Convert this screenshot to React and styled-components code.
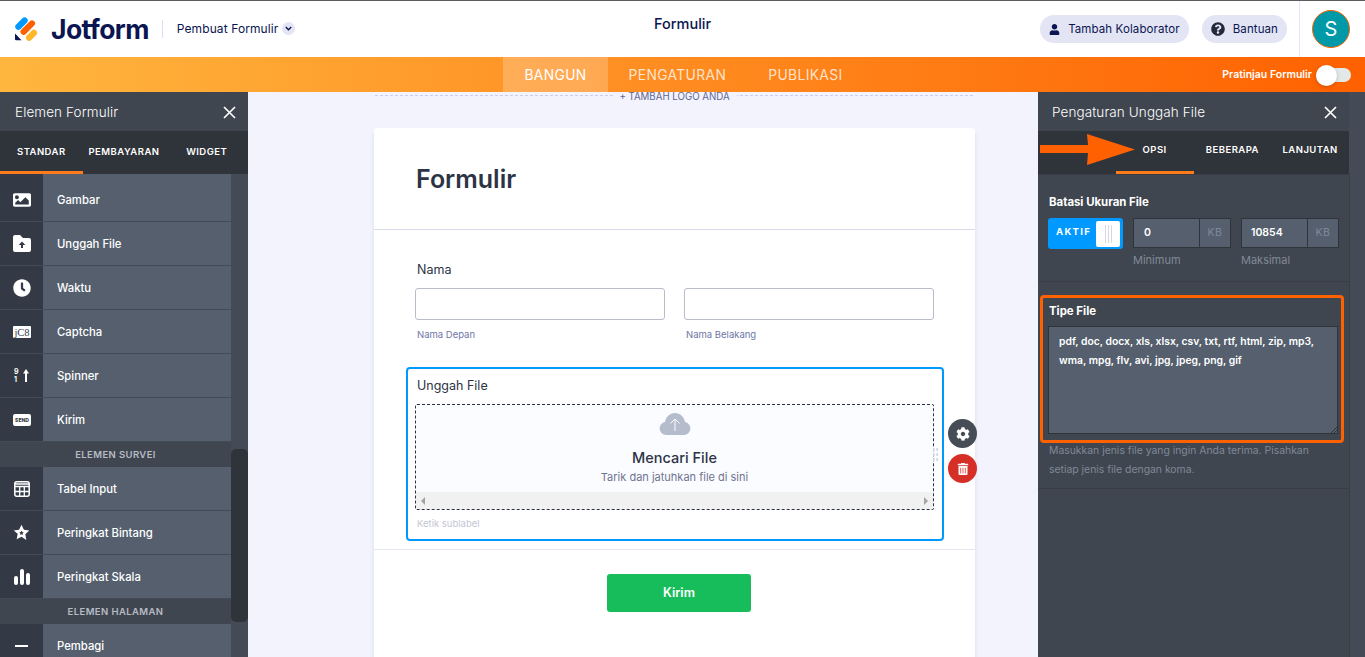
import React from "react";
import styled, { createGlobalStyle } from "styled-components";
import { FaCog, FaTrashAlt, FaUser, FaQuestionCircle, FaImage, FaClock } from "react-icons/fa";

const Global = createGlobalStyle`
  html, body { margin: 0; padding: 0; background: #f3f3fe; }
  * { box-sizing: border-box; }
  body { font-family: Inter, "Noto Sans", sans-serif; }
`;

const Page = styled.div`
  width: 1365px;
  height: 657px;
  overflow: hidden;
  display: flex;
  flex-direction: column;
  position: relative;
`;

const Header = styled.header`
  height: 57px;
  flex: none;
  background: #fff;
  border-top: 1px solid #5c5c5c;
  display: grid;
  grid-template-columns: 1fr auto 1fr;
  color: #0a1551;
`;
const Brand = styled.div`
  display: flex;
  align-items: center;
  padding: 0 0 1px 15px;
`;
const LogoText = styled.span`
  font-size: 26.5px;
  font-weight: 700;
  letter-spacing: -0.6px;
  margin-left: 12px;
`;
const BrandDivider = styled.span`
  width: 1px;
  height: 18px;
  background: #dadef3;
  margin: 0 14px 0 13px;
`;
const BrandSub = styled.span`
  font-size: 12px;
  letter-spacing: 0.1px;
`;
const Chevron = styled.span`
  width: 13px;
  height: 13px;
  border-radius: 50%;
  background: #e3e5f5;
  margin-left: 4px;
  display: flex;
  align-items: center;
  justify-content: center;
`;
const Title = styled.div`
  font-size: 14.5px;
  font-weight: 500;
  padding-top: 14px;
`;
const HeaderRight = styled.div`
  display: flex;
  justify-content: flex-end;
  align-items: center;
`;
const Pill = styled.button`
  height: 28px;
  border: 0;
  border-radius: 14px;
  background: #e3e5f5;
  color: #0a1551;
  font: 400 11.5px Inter, sans-serif;
  letter-spacing: 0.1px;
  display: flex;
  align-items: center;
  gap: 8px;
  padding: 0 9px;
  margin-left: 13px;
`;
const UserBox = styled.div`
  margin-left: 12px;
  height: 56px;
  width: 66px;
  border-left: 1px solid #e3e5f5;
  padding-left: 12px;
  display: flex;
  align-items: center;
`;
const Avatar = styled.div`
  width: 38px;
  height: 38px;
  border-radius: 50%;
  background: #0099a8;
  border: 1px solid #ff6100;
  color: #fff;
  font-size: 20px;
  display: flex;
  align-items: center;
  justify-content: center;
`;

const NavBar = styled.nav`
  height: 35px;
  flex: none;
  background: linear-gradient(90deg, #ffb63f 0%, #ff6100 100%);
  display: grid;
  grid-template-columns: 1fr auto 1fr;
`;
const NavTabs = styled.div`
  display: flex;
  margin-left: 2px;
`;
const NavTab = styled.div`
  padding: 0 21px;
  font-size: 13.8px;
  letter-spacing: 0.38px;
  display: flex;
  align-items: center;
  color: ${p => (p.$active ? "#fff" : "rgba(255,255,255,.78)")};
  background: ${p => (p.$active ? "rgba(255,255,255,.22)" : "transparent")};
`;
const Preview = styled.div`
  display: flex;
  justify-content: flex-end;
  align-items: center;
  padding-right: 14px;
  gap: 4px;
  color: #fff;
  font-size: 10.5px;
  font-weight: 600;
`;
const PreviewSwitch = styled.span`
  width: 35px;
  height: 14px;
  border-radius: 7px;
  background: #e3e8e8;
  position: relative;
`;
const PreviewKnob = styled.span`
  position: absolute;
  left: 0;
  top: -3px;
  width: 21px;
  height: 21px;
  border-radius: 50%;
  background: #fff;
  box-shadow: 0 1px 4px rgba(0, 0, 0, 0.2);
`;

const Workspace = styled.div`
  flex: 1;
  min-height: 0;
  display: flex;
`;
const Panel = styled.aside`
  flex: none;
  width: ${p => p.$w}px;
  background: #444b56;
  display: flex;
  flex-direction: column;
  overflow: hidden;
  position: relative;
`;
const PanelHead = styled.div`
  height: 39px;
  flex: none;
  width: ${p => p.$w}px;
  background: #40464f;
  color: #fff;
  font-size: 13.5px;
  font-weight: 300;
  letter-spacing: 0.1px;
  padding: 1px 12px 0 ${p => p.$pad}px;
  display: flex;
  align-items: center;
  justify-content: space-between;
`;
const PanelTabs = styled.div`
  height: 43px;
  flex: none;
  width: ${p => p.$w}px;
  background: #2f333a;
  display: grid;
  grid-template-columns: repeat(${p => p.$n}, 1fr);
`;
const PanelTab = styled.div`
  display: flex;
  align-items: center;
  justify-content: center;
  color: #fff;
  font-size: 9.5px;
  font-weight: 600;
  letter-spacing: 0.45px;
  padding-bottom: ${p => p.$lift}px;
  border-bottom: 3px solid ${p => (p.$active ? "#ff7b1c" : "transparent")};
`;

const ElementList = styled.div`
  width: 231px;
  padding-top: 4px;
  background: linear-gradient(90deg, #343a45 43px, #555f6e 43px);
`;
const ElementRow = styled.div`
  height: 44px;
  display: flex;
  align-items: center;
  border-bottom: 1px solid #434b57;
  background: #555f6e;
  color: #fff;
  font-size: 11.3px;
  font-weight: 500;
`;
const ElementIcon = styled.span`
  width: 43px;
  height: 100%;
  flex: none;
  background: #343a45;
  margin-right: 14px;
  display: flex;
  align-items: center;
  justify-content: center;
`;
const SectionRow = styled.div`
  height: 25px;
  background: #40464f;
  color: #b6bcc6;
  font-size: 9.5px;
  font-weight: 600;
  letter-spacing: 0.4px;
  padding-bottom: 1px;
  display: flex;
  align-items: center;
  justify-content: center;
`;
const ScrollThumb = styled.div`
  position: absolute;
  left: 231px;
  top: 357px;
  width: 17px;
  height: 173px;
  border-radius: 5px;
  background: #2f333a;
`;

const Canvas = styled.main`
  flex: 1;
  background: #f3f3fe;
  padding-left: 126px;
  overflow: hidden;
`;
const FormColumn = styled.div`
  width: 601px;
`;
const LogoSlot = styled.div`
  height: 36px;
  padding-top: 3px;
  position: relative;
`;
const LogoLine = styled.div`
  border-top: 1px dashed #c8ceed;
  margin: 0 2px 0 1px;
`;
const LogoLabel = styled.span`
  position: absolute;
  left: 50%;
  top: 0;
  transform: translateX(-50%);
  background: #f3f3fe;
  padding: 0 7px;
  font-size: 9.7px;
  line-height: 10px;
  color: #5f6690;
  white-space: nowrap;
`;
const Card = styled.div`
  background: #fff;
  border-radius: 3px 3px 0 0;
  height: 600px;
  box-shadow: 0 4px 4px rgba(87, 114, 174, 0.16);
`;
const CardTitle = styled.h1`
  margin: 0;
  height: 102px;
  border-bottom: 1px solid #d8dae9;
  padding: 33px 0 0 42px;
  font-size: 25px;
  line-height: 36px;
  font-weight: 600;
  color: #2c3345;
`;
const NameField = styled.div`
  padding: 31px 41px 0;
`;
const FieldLabel = styled.div`
  color: #2c3345;
  font-size: 12.5px;
  line-height: 18px;
  padding-left: ${p => p.$indent || 0}px;
`;
const NameGrid = styled.div`
  display: grid;
  grid-template-columns: 250px 250px;
  gap: 19px;
  margin-top: 9px;
`;
const TextBox = styled.div`
  height: 32px;
  border: 1px solid #b8bdc9;
  border-radius: 3px;
`;
const SubLabel = styled.div`
  font-size: 9.5px;
  line-height: 12px;
  color: #6f76a7;
  margin: 9px 0 0 2px;
`;
const UploadField = styled.div`
  position: relative;
  margin: 26px 31px 0 32px;
  height: 174px;
  border: 2px solid #0099ff;
  border-radius: 4px;
  padding: 8px 8px 0 7px;
`;
const UploadZone = styled.div`
  height: 106px;
  margin-top: 9px;
  border: 1px dashed #2c3345;
  border-radius: 2px;
  background: #fbfcff;
  display: flex;
  flex-direction: column;
  align-items: center;
  padding-top: 8px;
`;
const ZoneTitle = styled.div`
  margin-top: 13px;
  font-size: 14.5px;
  font-weight: 500;
  line-height: 20px;
  color: #2c3345;
`;
const ZoneHint = styled.div`
  font-size: 11px;
  line-height: 14px;
  margin-top: 2px;
  color: #6f7490;
`;
const ZoneScroll = styled.div`
  margin-top: auto;
  width: 100%;
  height: 17px;
  background: #f1f1f1;
  display: flex;
  align-items: center;
  justify-content: space-between;
  padding: 0 5px;
`;
const ScrollArrow = styled.span`
  width: 0;
  height: 0;
  border-top: 4px solid transparent;
  border-bottom: 4px solid transparent;
  border-${p => (p.$left ? "right" : "left")}: 4px solid #a3a3a3;
`;
const TypeSub = styled.div`
  font-size: 9.5px;
  line-height: 12px;
  margin: 8px 0 0 2px;
  color: #c3c6d4;
`;
const RoundAction = styled.span`
  position: absolute;
  left: 540px;
  top: ${p => p.$top}px;
  width: 29px;
  height: 29px;
  border-radius: 50%;
  background: ${p => p.$bg};
  color: #fff;
  display: flex;
  align-items: center;
  justify-content: center;
`;
const DragDots = styled.span`
  position: absolute;
  left: 524px;
  top: 78px;
  width: 7px;
  height: 15px;
  background-image: radial-gradient(circle, #d0d4e6 1.1px, transparent 1.2px);
  background-size: 3.5px 5px;
`;
const FormFooter = styled.div`
  margin-top: 8px;
  border-top: 1px solid #e3e5f0;
  padding-top: 24px;
  display: flex;
  justify-content: center;
`;
const Submit = styled.button`
  width: 144px;
  height: 38px;
  margin-left: 9px;
  border: 0;
  border-radius: 3px;
  padding: 0 0 2px;
  background: #18bd5b;
  color: #fff;
  font: 600 12.5px Inter, sans-serif;
`;

const Settings = styled.div`
  width: 312px;
  flex: 1;
  color: #fff;
  background: #40464f;
  border-right: 1px solid #383d46;
`;
const LimitSection = styled.section`
  height: 108px;
  border-top: 1px solid #383d46;
  border-bottom: 1px solid #383d46;
  padding: 20px 0 0 10px;
`;
const SectionTitle = styled.div`
  font-size: 11.4px;
  font-weight: 700;
  line-height: 14px;
  padding-left: 1px;
`;
const LimitRow = styled.div`
  display: flex;
  gap: 10px;
  margin-top: 9px;
`;
const OnToggle = styled.div`
  width: 75px;
  height: 31px;
  flex: none;
  border-radius: 3px;
  background: #0099ff;
  position: relative;
  font-size: 9.5px;
  font-weight: 700;
  letter-spacing: 1.3px;
  padding: 8px 0 0 8px;
`;
const OnKnob = styled.span`
  position: absolute;
  right: 3px;
  top: 3px;
  width: 24px;
  height: 26px;
  border-radius: 2px;
  background: #fff;
  display: flex;
  justify-content: center;
  gap: 2px;
  padding: 4px 0;
`;
const KnobLine = styled.i`
  width: 1px;
  background: #d5d8df;
`;
const SizeColumn = styled.div`
  width: 98px;
  flex: none;
`;
const SizeBox = styled.div`
  height: 30px;
  background: #555f6e;
  border: 1px solid #2f333a;
  display: flex;
  font-size: 10.5px;
  font-weight: 600;
`;
const SizeValue = styled.span`
  flex: 1;
  padding-left: ${p => p.$pad}px;
  line-height: 28px;
`;
const SizeUnit = styled.span`
  width: 31px;
  border-left: 1px solid #2f333a;
  color: #7f8998;
  font-weight: 400;
  letter-spacing: 0.5px;
  text-align: center;
  line-height: 28px;
`;
const SizeLabel = styled.div`
  font-size: 11px;
  line-height: 14px;
  margin-top: 5px;
  color: #7f8998;
`;
const TypeSection = styled.section`
  height: 207px;
  padding-top: 13px;
  border-bottom: 1px solid #383d46;
`;
const Highlight = styled.div`
  margin: 0 5px 0 2px;
  height: 148px;
  border: 3px solid #ff6100;
  border-radius: 4px;
  padding: 6px 3px 0 5px;
`;
const TypeBox = styled.div`
  position: relative;
  height: 108px;
  margin-top: 8px;
  background: #555f6e;
  border: 1px solid #2f333a;
  padding: 5px 10px;
  font-size: 10.35px;
  font-weight: 600;
  line-height: 19px;
`;
const Grip = styled.svg`
  position: absolute;
  right: 0;
  bottom: 0;
`;
const HelpText = styled.p`
  margin: -2px 12px 0 11px;
  font-size: 10.4px;
  line-height: 19px;
  color: #7f8998;
`;
const Arrow = styled.svg`
  position: absolute;
  left: 2px;
  top: 42px;
`;

const white = "#fff";
const Star = () => (
  <svg width="17" height="17" viewBox="0 0 24 24">
    <path fill={white} fillRule="evenodd" d="M12 1l3.4 7.2 7.6 1-5.6 5.4 1.4 7.9L12 18l-6.800 3.500 1.400-7.900L1 9.200l7.600-1zM12 9l-1 2.200-2.300.3 1.700 1.600-.4 2.300 2-1.100 2 1.100-.4-2.300 1.700-1.600-2.300-.3z" />
  </svg>
);
const items = {
  image: <FaImage size={18} color={white} />,
  upload: (
    <svg width="18" height="17" viewBox="0 0 18 17">
      <path fill={white} fillRule="evenodd" d="M2 0h5l3 3h6a2 2 0 0 1 2 2v10a2 2 0 0 1-2 2H2a2 2 0 0 1-2-2V2a2 2 0 0 1 2-2zm7 6.500L5.700 10H8v3h2v-3h2.300z" />
    </svg>
  ),
  clock: <FaClock size={18} color={white} />,
  captcha: (
    <svg width="18" height="12" viewBox="0 0 18 12">
      <rect width="18" height="12" rx="1" fill={white} />
      <text x="9" y="9.500" textAnchor="middle" fontSize="10.500" fontFamily="Liberation Serif, serif" fill="#343a45">jC8</text>
    </svg>
  ),
  spinner: (
    <svg width="16" height="17" viewBox="0 0 16 17">
      <text x="0" y="7" fontSize="7" fontWeight="700" fontFamily="Inter, sans-serif" fill={white}>9</text>
      <text x="0" y="15" fontSize="7" fontWeight="700" fontFamily="Inter, sans-serif" fill={white}>1</text>
      <path fill={white} d="M12 2l3 4.500h-2V15h-2V6.500H9z" />
    </svg>
  ),
  send: (
    <svg width="18" height="12" viewBox="0 0 18 12">
      <rect width="18" height="12" rx="2" fill={white} />
      <text x="9" y="8" textAnchor="middle" fontSize="5" fontWeight="800" fontFamily="Inter, sans-serif" fill="#343a45">SEND</text>
    </svg>
  ),
  table: (
    <svg width="16" height="16" viewBox="0 0 16 16">
      <rect x=".8" y=".8" width="14.400" height="14.400" rx="2" fill="none" stroke={white} strokeWidth="1.500" />
      <path stroke={white} strokeWidth="1.300" d="M1 5.500h14M1 10.500h14M5.700 5v10M10.300 5v10M1 3h14" />
    </svg>
  ),
  star: <Star />,
  bars: (
    <svg width="16" height="16" viewBox="0 0 16 16">
      <rect x="0" y="7" width="4" height="9" rx="2" fill={white} />
      <rect x="6" y="0" width="4" height="16" rx="2" fill={white} />
      <rect x="12" y="4" width="4" height="12" rx="2" fill={white} />
    </svg>
  ),
  minus: (
    <svg width="13" height="2" viewBox="0 0 13 2">
      <rect width="13" height="2" fill={white} />
    </svg>
  ),
};

const Close = () => (
  <svg width="13" height="13" viewBox="0 0 13 13">
    <path d="M1 1l11 11M12 1L1 12" stroke="#fff" strokeWidth="1.700" />
  </svg>
);

const JotformMark = () => (
  <svg width="24" height="25" viewBox="0 0 24 25">
    <rect x="-1" y="4.500" width="15" height="6.200" rx="3.100" transform="rotate(-45 6.500 7.600)" fill="#0099ff" />
    <rect x="3.800" y="8.500" width="18" height="6.200" rx="3.100" transform="rotate(-45 12.800 11.600)" fill="#ff6100" />
    <rect x="10" y="16.200" width="13" height="6.200" rx="3.100" transform="rotate(-45 16.500 19.300)" fill="#ffb629" />
    <path d="M0 17.500l6.500 6.800H1.200A1.200 1.200 0 0 1 0 23z" fill="#0a1551" />
  </svg>
);

const ElementItem = ({ icon, label }) => (
  <ElementRow>
    <ElementIcon>{items[icon]}</ElementIcon>
    {label}
  </ElementRow>
);

const SizeInput = ({ value, pad, label }) => (
  <SizeColumn>
    <SizeBox>
      <SizeValue $pad={pad}>{value}</SizeValue>
      <SizeUnit>KB</SizeUnit>
    </SizeBox>
    <SizeLabel>{label}</SizeLabel>
  </SizeColumn>
);

export default function App() {
  return (
    <Page>
      <Global />
      <Header>
        <Brand>
          <JotformMark />
          <LogoText>Jotform</LogoText>
          <BrandDivider />
          <BrandSub>Pembuat Formulir</BrandSub>
          <Chevron>
            <svg width="7" height="5" viewBox="0 0 7 5">
              <path d="M.8 1l2.700 2.700L6.200 1" fill="none" stroke="#0a1551" strokeWidth="1.400" />
            </svg>
          </Chevron>
        </Brand>
        <Title>Formulir</Title>
        <HeaderRight>
          <Pill>
            <FaUser size={11} />
            Tambah Kolaborator
          </Pill>
          <Pill>
            <FaQuestionCircle size={14} color="#23283a" />
            Bantuan
          </Pill>
          <UserBox>
            <Avatar>S</Avatar>
          </UserBox>
        </HeaderRight>
      </Header>

      <NavBar>
        <span />
        <NavTabs>
          <NavTab $active>BANGUN</NavTab>
          <NavTab>PENGATURAN</NavTab>
          <NavTab>PUBLIKASI</NavTab>
        </NavTabs>
        <Preview>
          Pratinjau Formulir
          <PreviewSwitch>
            <PreviewKnob />
          </PreviewSwitch>
        </Preview>
      </NavBar>

      <Workspace>
        <Panel $w={248}>
          <PanelHead $w={248} $pad={15}>
            Elemen Formulir
            <Close />
          </PanelHead>
          <PanelTabs $w={248} $n={3}>
            <PanelTab $active $lift={0}>STANDAR</PanelTab>
            <PanelTab $lift={0}>PEMBAYARAN</PanelTab>
            <PanelTab $lift={0}>WIDGET</PanelTab>
          </PanelTabs>
          <ElementList>
            <ElementItem icon="image" label="Gambar" />
            <ElementItem icon="upload" label="Unggah File" />
            <ElementItem icon="clock" label="Waktu" />
            <ElementItem icon="captcha" label="Captcha" />
            <ElementItem icon="spinner" label="Spinner" />
            <ElementItem icon="send" label="Kirim" />
            <SectionRow>ELEMEN SURVEI</SectionRow>
            <ElementItem icon="table" label="Tabel Input" />
            <ElementItem icon="star" label="Peringkat Bintang" />
            <ElementItem icon="bars" label="Peringkat Skala" />
            <SectionRow>ELEMEN HALAMAN</SectionRow>
            <ElementItem icon="minus" label="Pembagi" />
          </ElementList>
          <ScrollThumb />
        </Panel>

        <Canvas>
          <FormColumn>
            <LogoSlot>
              <LogoLine />
              <LogoLabel>+ TAMBAH LOGO ANDA</LogoLabel>
            </LogoSlot>
            <Card>
              <CardTitle>Formulir</CardTitle>
              <NameField>
                <FieldLabel $indent={2}>Nama</FieldLabel>
                <NameGrid>
                  <div>
                    <TextBox />
                    <SubLabel>Nama Depan</SubLabel>
                  </div>
                  <div>
                    <TextBox />
                    <SubLabel>Nama Belakang</SubLabel>
                  </div>
                </NameGrid>
              </NameField>
              <UploadField>
                <FieldLabel $indent={2}>Unggah File</FieldLabel>
                <UploadZone>
                  <svg width="32" height="22" viewBox="0 0 32 22">
                    <path fill="#b5bdcd" d="M7 22a6.500 6.500 0 0 1-1-12.900C6.700 4 10.800 0 16 0s9.300 4 10 9.100A6.500 6.500 0 0 1 25 22z" />
                    <path fill="none" stroke="#fbfcff" strokeWidth="1" d="M16 18V6M11.500 10.500L16 6l4.500 4.500" />
                  </svg>
                  <ZoneTitle>Mencari File</ZoneTitle>
                  <ZoneHint>Tarik dan jatuhkan file di sini</ZoneHint>
                  <ZoneScroll>
                    <ScrollArrow $left />
                    <ScrollArrow />
                  </ZoneScroll>
                </UploadZone>
                <TypeSub>Ketik sublabel</TypeSub>
                <DragDots />
                <RoundAction $top={50} $bg="#474d56">
                  <FaCog size={14} />
                </RoundAction>
                <RoundAction $top={85} $bg="#d62f27">
                  <FaTrashAlt size={12} />
                </RoundAction>
              </UploadField>
              <FormFooter>
                <Submit>Kirim</Submit>
              </FormFooter>
            </Card>
          </FormColumn>
        </Canvas>

        <Panel $w={327}>
          <PanelHead $w={311} $pad={14}>
            Pengaturan Unggah File
            <Close />
          </PanelHead>
          <PanelTabs $w={311} $n={4}>
            <PanelTab $lift={3} />
            <PanelTab $active $lift={3}>OPSI</PanelTab>
            <PanelTab $lift={3}>BEBERAPA</PanelTab>
            <PanelTab $lift={3}>LANJUTAN</PanelTab>
          </PanelTabs>
          <Settings>
            <LimitSection>
              <SectionTitle>Batasi Ukuran File</SectionTitle>
              <LimitRow>
                <OnToggle>
                  AKTIF
                  <OnKnob>
                    <KnobLine />
                    <KnobLine />
                    <KnobLine />
                  </OnKnob>
                </OnToggle>
                <SizeInput value="0" pad={10} label="Minimum" />
                <SizeInput value="10854" pad={9} label="Maksimal" />
              </LimitRow>
            </LimitSection>
            <TypeSection>
              <Highlight>
                <SectionTitle>Tipe File</SectionTitle>
                <TypeBox>
                  pdf, doc, docx, xls, xlsx, csv, txt, rtf, html, zip, mp3,
                  <br />
                  wma, mpg, flv, avi, jpg, jpeg, png, gif
                  <Grip width="7" height="7" viewBox="0 0 7 7">
                    <path d="M1 7l6-6M4 7l3-3" stroke="#2f333a" strokeWidth="1" />
                  </Grip>
                </TypeBox>
              </Highlight>
              <HelpText>
                Masukkan jenis file yang ingin Anda terima. Pisahkan setiap jenis file dengan koma.
              </HelpText>
            </TypeSection>
          </Settings>
          <Arrow width="96" height="32" viewBox="0 0 96 32">
            <path fill="#ff6100" d="M0 11h48L47 0l48 15.500L47 31l1-12H0z" />
          </Arrow>
        </Panel>
      </Workspace>
    </Page>
  );
}
